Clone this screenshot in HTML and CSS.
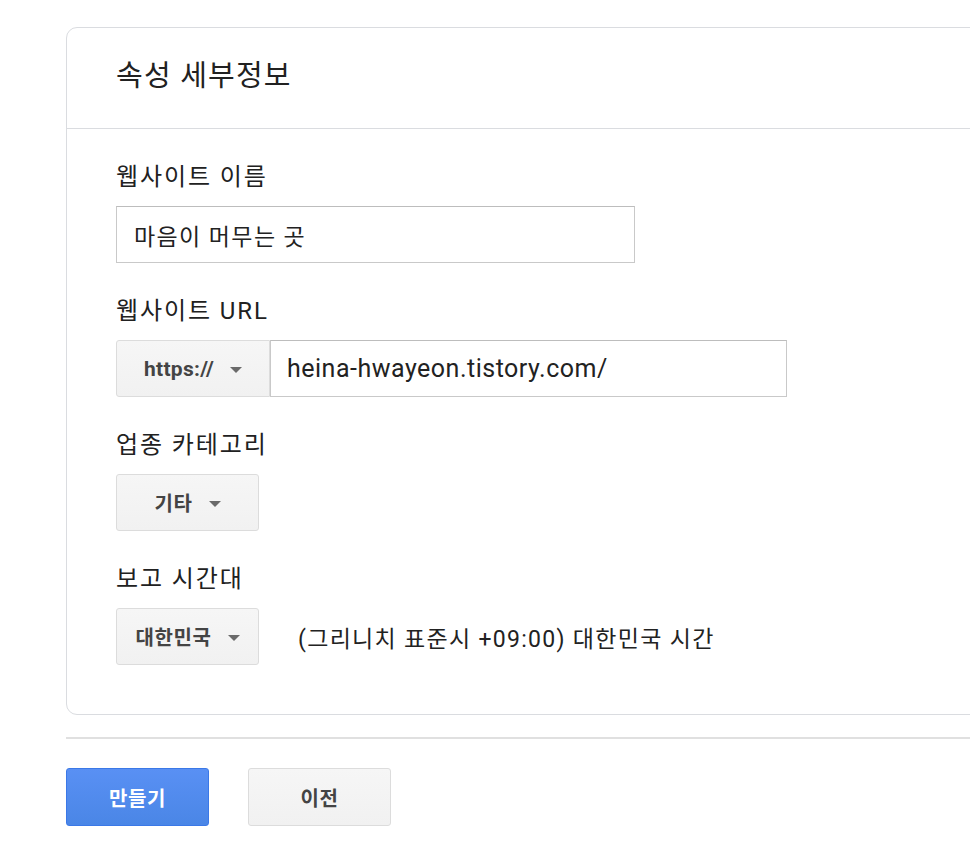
FILE: index.html
```html
<!DOCTYPE html>
<html lang="ko">
<head>
<meta charset="utf-8">
<title>속성 세부정보</title>
<link rel="stylesheet" href="styles.css">
</head>
<body>
<div class="page">
  <section class="card">
    <div class="card-head">
      <h2 class="title">속성 세부정보</h2>
    </div>
    <div class="card-body">
      <div class="field">
        <div class="label">웹사이트 이름</div>
        <div class="input name-input">마음이 머무는 곳</div>
      </div>
      <div class="field">
        <div class="label">웹사이트 URL</div>
        <div class="url-group">
          <div class="select proto">https://<span class="caret"></span></div>
          <div class="input url-input">heina-hwayeon.tistory.com/</div>
        </div>
      </div>
      <div class="field">
        <div class="label">업종 카테고리</div>
        <div class="select btn">기타<span class="caret"></span></div>
      </div>
      <div class="field">
        <div class="label">보고 시간대</div>
        <div class="tz-row">
          <div class="select btn">대한민국<span class="caret"></span></div>
          <div class="tz-text">(그리니치 표준시 +09:00) 대한민국 시간</div>
        </div>
      </div>
    </div>
  </section>
  <hr class="divider">
  <div class="actions">
    <div class="action primary">만들기</div>
    <div class="action secondary">이전</div>
  </div>
</div>
</body>
</html>
```
FILE: styles.css
```css
html, body {
  margin: 0;
  padding: 0;
  background: #fff;
  overflow: hidden;
}
body {
  font-family: Roboto, "Noto Sans CJK KR", "Noto Sans", sans-serif;
  color: #222;
}
.page {
  padding: 27px 0 0 66px;
  width: 1000px;
}
.card {
  border: 1px solid #dadce0;
  border-radius: 11px;
  width: 960px;
}
.card-head {
  height: 101px;
  box-sizing: border-box;
  padding: 30px 0 0 49px;
  border-bottom: 1px solid #dadce0;
}
.title {
  margin: 0;
  font-weight: 400;
  font-size: 29px;
  letter-spacing: 1.2px;
  line-height: 36px;
  color: #212121;
}
.card-body {
  padding: 33px 0 49px 49px;
}
.field + .field {
  margin-top: 33px;
}
.label {
  font-size: 24px;
  letter-spacing: 1.9px;
  line-height: 30px;
  color: #212121;
  margin-bottom: 14px;
}
.input {
  box-sizing: border-box;
  height: 57px;
  border: 1px solid #c9c9c9;
  border-top-color: #bdbdbd;
  background: #fff;
  display: flex;
  align-items: center;
  font-size: 23px;
  letter-spacing: 1.4px;
  color: #222;
}
.name-input {
  width: 519px;
  padding-left: 17px;
}
.url-group {
  display: flex;
}
.url-input {
  width: 517px;
  padding-left: 16px;
  font-size: 25px;
  letter-spacing: 0.5px;
}
.select {
  box-sizing: border-box;
  height: 57px;
  border: 1px solid #dcdcdc;
  border-radius: 3px;
  background: linear-gradient(#f6f6f6, #f1f1f1);
  display: flex;
  align-items: center;
  justify-content: center;
  font-size: 20px;
  letter-spacing: 0.6px;
  font-weight: 700;
  color: #444;
}
.proto {
  width: 154px;
  border-radius: 3px 0 0 3px;
  border-right: 1px solid #dcdcdc;
  font-size: 21px;
  letter-spacing: 0.3px;
}
.btn {
  width: 143px;
}
.caret {
  display: inline-block;
  width: 0;
  height: 0;
  border-left: 6px solid transparent;
  border-right: 6px solid transparent;
  border-top: 6px solid #6a6a6a;
  margin-left: 16px;
  margin-top: 2px;
}
.tz-row {
  display: flex;
  align-items: center;
}
.tz-text {
  margin-left: 39px;
  font-size: 23px;
  letter-spacing: 1.3px;
  color: #222;
}
.divider {
  margin: 22px 0 0 0;
  border: 0;
  border-top: 2px solid #e0e0e0;
  width: 960px;
}
.actions {
  display: flex;
  gap: 39px;
  margin-top: 29px;
}
.action {
  box-sizing: border-box;
  width: 143px;
  height: 58px;
  border-radius: 3px;
  display: flex;
  align-items: center;
  justify-content: center;
  font-size: 20px;
  letter-spacing: 0.6px;
  font-weight: 700;
}
.primary {
  background: linear-gradient(#5990f4, #4a86e6);
  border: 1px solid #3b78e7;
  color: #fff;
}
.secondary {
  background: linear-gradient(#f6f6f6, #f1f1f1);
  border: 1px solid #dcdcdc;
  color: #444;
}
```
